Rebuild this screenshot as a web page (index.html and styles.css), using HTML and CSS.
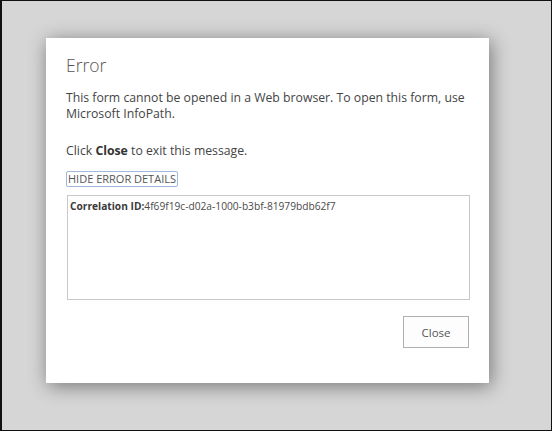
FILE: index.html
```html
<!DOCTYPE html>
<html lang="en">
  <head>
    <meta charset="UTF-8" />
    <meta name="viewport" content="width=device-width, initial-scale=1.0" />
    <link rel="stylesheet" href="styles.css">
  </head>
  <body>
    <div class="screen">
      <div class="dialog">
        <h1 class="dialog-title">Error</h1>
        <p class="dialog-message">
          This form cannot be opened in a Web browser. To open this form, use
          Microsoft InfoPath.
        </p>
        <p class="dialog-hint">Click <b>Close</b> to exit this message.</p>
        <a class="details-toggle" href="#">HIDE ERROR DETAILS</a>
        <div class="details-box">
          <b>Correlation ID:</b>4f69f19c-d02a-1000-b3bf-81979bdb62f7
        </div>
        <div class="dialog-actions">
          <button class="close-button">Close</button>
        </div>
      </div>
    </div>
  </body>
</html>
```

FILE: styles.css
```css
html,
body {
  margin: 0;
  height: 100%;
}

body {
  font-family: "Open Sans", "Noto Sans", sans-serif;
  color: #444;
}

.screen {
  box-sizing: border-box;
  height: 431px;
  border: 1px solid #111;
  border-width: 1px 1px 1px 2px;
  background-color: #d6d6d6; /* grey backdrop */
  padding: 37px 0 0 44px;
}

.dialog {
  box-sizing: border-box;
  width: 443px;
  height: 345px;
  background-color: #fff;
  box-shadow: 2px 3px 18px rgba(0, 0, 0, 0.45);
  padding: 15px 20px 0 20px;
}

.dialog-title {
  margin: 0;
  font-size: 17.5px;
  font-weight: 300;
  line-height: 24px;
  color: #555;
}

.dialog-message,
.dialog-hint {
  margin: 0;
  font-size: 12.25px;
  line-height: 16px;
  color: #444;
}

.dialog-message {
  margin-top: 13px;
}

.dialog-hint {
  margin-top: 21px;
}

.dialog-hint b {
  font-weight: 700;
  color: #333;
}

.details-toggle {
  display: inline-block;
  margin-top: 12px;
  padding: 0 1px;
  font-size: 11px;
  line-height: 14px;
  color: #555;
  text-decoration: none;
  border: 1px solid #9fb8db;
  border-radius: 2px;
}

.details-box {
  box-sizing: border-box;
  width: 403px;
  height: 105px;
  margin-top: 7px;
  margin-left: 1px;
  padding: 3px 2px;
  border: 1px solid #c8c8c8;
  font-size: 10.2px;
  line-height: 14px;
  color: #4a4a4a;
}

.details-box b {
  color: #3a3a3a;
}

.dialog-actions {
  display: flex;
  justify-content: flex-end;
  margin-top: 16px;
}

.close-button {
  width: 66px;
  height: 32px;
  background-color: #fdfdfd;
  border: 1px solid #b0b0b0;
  font-family: "Open Sans", "Noto Sans", sans-serif;
  font-size: 11.5px;
  color: #555;
  cursor: pointer;
}
```
